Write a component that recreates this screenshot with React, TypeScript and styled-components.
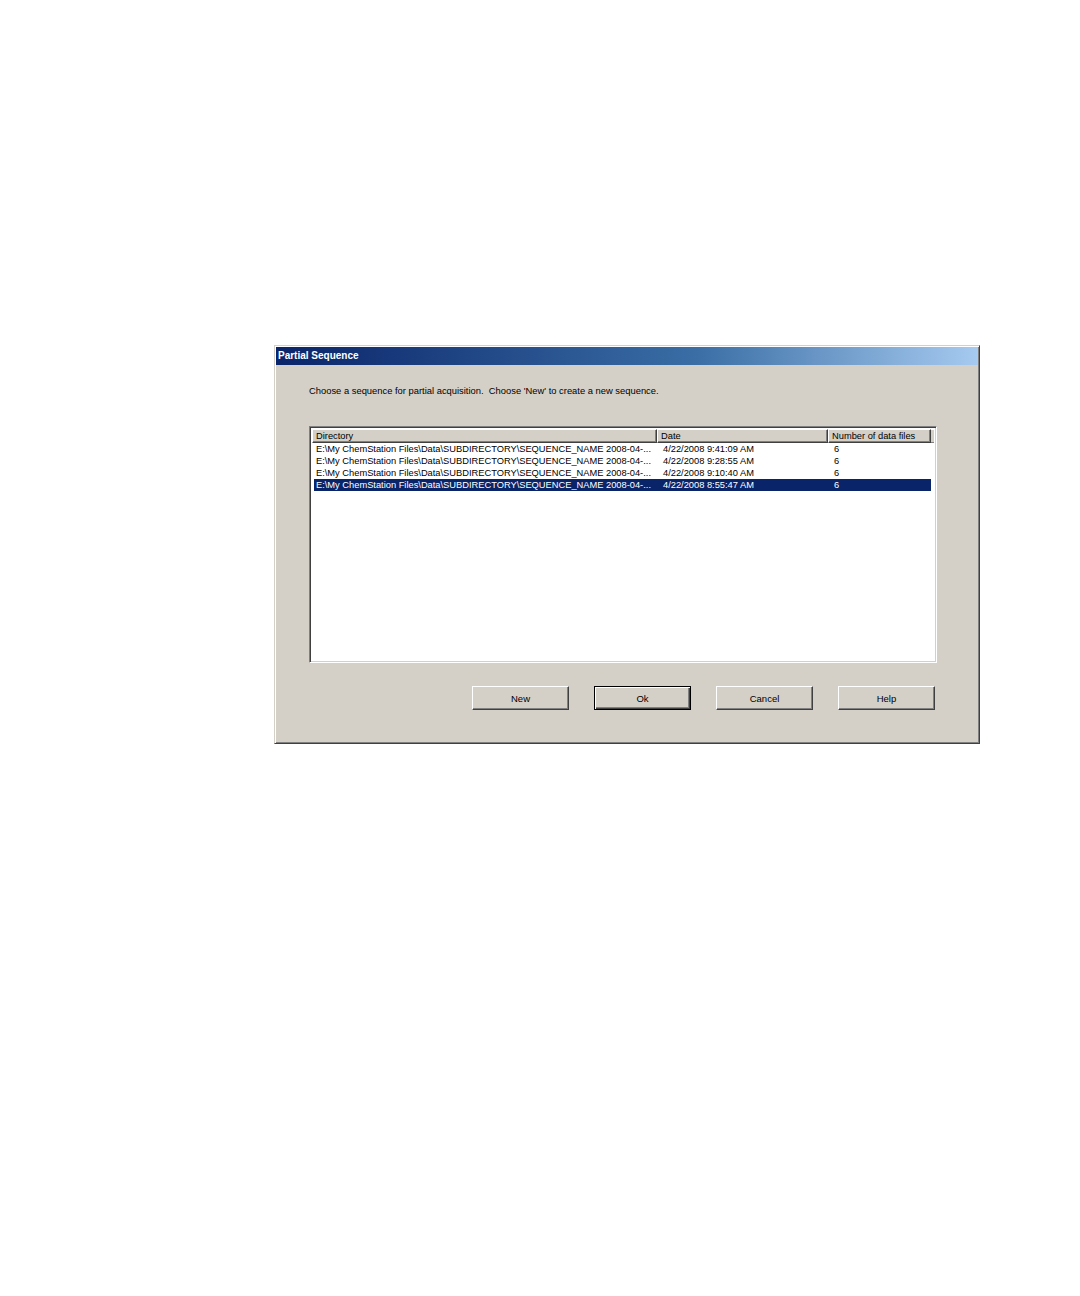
import styled, { createGlobalStyle } from "styled-components";

const Global = createGlobalStyle`
  html, body {
    margin: 0;
    padding: 0;
    background: #fff;
  }
  body {
    font-family: "Liberation Sans", Arial, sans-serif;
  }
`;

const Page = styled.div`
  width: 1080px;
  height: 1296px;
  padding: 345px 0 0 274px;
  box-sizing: border-box;
`;

const Dialog = styled.div`
  width: 706px;
  height: 399px;
  box-sizing: border-box;
  background: #d4d0c8;
  border: 1px solid;
  border-color: #d4d0c8 #404040 #404040 #d4d0c8;
  box-shadow: inset 1px 1px #fff, inset -1px -1px #808080;
  padding: 1px;
  display: flex;
  flex-direction: column;
`;

const TitleBar = styled.div`
  height: 18px;
  background: linear-gradient(to right, #0a246a, #3a6ea5 60%, #a6caf0);
  color: #fff;
  font-family: "Liberation Sans", Arial, sans-serif;
  font-weight: 700;
  font-size: 10px;
  line-height: 18px;
  padding-left: 2px;
`;

const Body = styled.div`
  flex: 1;
  padding: 20px 41px 0 33px;
  display: flex;
  flex-direction: column;
`;

const Prompt = styled.p`
  margin: 0;
  font-size: 9.4px;
  line-height: 11px;
  color: #000;
  white-space: pre;
`;

const ListBox = styled.div`
  margin-top: 30px;
  height: 237px;
  box-sizing: border-box;
  background: #fff;
  border: 1px solid;
  border-color: #808080 #fff #fff #808080;
  box-shadow: inset 1px 1px #404040, inset -1px -1px #d4d0c8;
  padding: 2px;
`;

const HeaderRow = styled.div`
  display: flex;
  height: 14px;
`;

const HeaderCell = styled.div<{ $w: number }>`
  width: ${(p) => p.$w}px;
  flex: none;
  box-sizing: border-box;
  background: #d4d0c8;
  border: 1px solid;
  border-color: #fff #404040 #404040 #fff;
  box-shadow: inset -1px -1px #808080;
  font-size: 9.3px;
  line-height: 12px;
  padding-left: 3px;
  color: #000;
  white-space: nowrap;
  overflow: hidden;
`;

const HeaderFill = styled.div`
  flex: 1;
  background: #d4d0c8;
  border-top: 1px solid #fff;
  border-bottom: 1px solid #808080;
`;

const Row = styled.div<{ $selected?: boolean }>`
  display: flex;
  height: 12px;
  margin-left: 2px;
  width: 617px;
  background: ${(p) => (p.$selected ? "#0a246a" : "transparent")};
  color: ${(p) => (p.$selected ? "#fff" : "#000")};
`;

const Cell = styled.div<{ $w: number }>`
  width: ${(p) => p.$w}px;
  flex: none;
  box-sizing: border-box;
  padding-left: 2px;
  font-size: 9.3px;
  line-height: 12px;
  white-space: nowrap;
  overflow: hidden;
`;

const ButtonRow = styled.div`
  display: flex;
  justify-content: flex-end;
  gap: 25px;
  margin-top: 23px;
  padding-right: 2px;
`;

const Button = styled.button<{ $default?: boolean }>`
  width: 97px;
  height: 24px;
  box-sizing: border-box;
  background: #d4d0c8;
  font-family: "Liberation Sans", Arial, sans-serif;
  font-size: 9.5px;
  color: #000;
  padding: 0;
  border: 1px solid;
  border-color: ${(p) =>
    p.$default ? "#000" : "#fff #404040 #404040 #fff"};
  box-shadow: ${(p) =>
    p.$default
      ? "inset 1px 1px #fff, inset -1px -1px #404040, inset -2px -2px #808080"
      : "inset -1px -1px #808080"};
`;

const rows = [
  { date: "4/22/2008 9:41:09 AM" },
  { date: "4/22/2008 9:28:55 AM" },
  { date: "4/22/2008 9:10:40 AM" },
  { date: "4/22/2008 8:55:47 AM", selected: true },
];

const dir = "E:\\My ChemStation Files\\Data\\SUBDIRECTORY\\SEQUENCE_NAME 2008-04-...";

export default function App() {
  return (
    <Page>
      <Global />
      <Dialog>
        <TitleBar>Partial Sequence</TitleBar>
        <Body>
          <Prompt>Choose a sequence for partial acquisition.  Choose 'New' to create a new sequence.</Prompt>
          <ListBox>
            <HeaderRow>
              <HeaderCell $w={345}>Directory</HeaderCell>
              <HeaderCell $w={171}>Date</HeaderCell>
              <HeaderCell $w={103}>Number of data files</HeaderCell>
              <HeaderFill />
            </HeaderRow>
            {rows.map((r, i) => (
              <Row key={i} $selected={r.selected}>
                <Cell $w={347}>{dir}</Cell>
                <Cell $w={171}>{r.date}</Cell>
                <Cell $w={99}>6</Cell>
              </Row>
            ))}
          </ListBox>
          <ButtonRow>
            <Button>New</Button>
            <Button $default>Ok</Button>
            <Button>Cancel</Button>
            <Button>Help</Button>
          </ButtonRow>
        </Body>
      </Dialog>
    </Page>
  );
}
